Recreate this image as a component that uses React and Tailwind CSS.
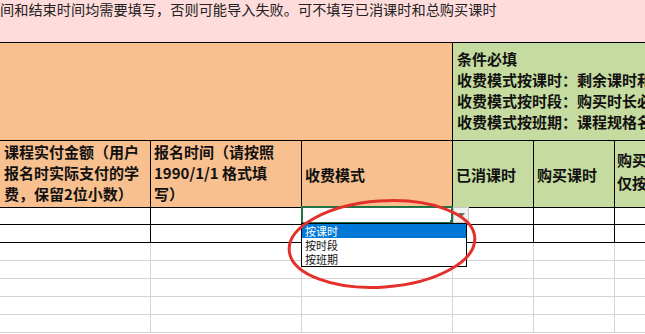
import React from 'react';

const font = { fontFamily: '"Noto Sans CJK SC", "Microsoft YaHei", sans-serif' };

const greenLines = [
  '条件必填',
  '收费模式按课时：剩余课时和购买课时必填',
  '收费模式按时段：购买时长必填',
  '收费模式按班期：课程规格名称必填',
];

const options = ['按课时', '按时段', '按班期'];

const Row = ({ height, dark }) => {
  const line = dark ? 'border-black' : 'border-[#d4d4d4]';
  return (
    <div className={`flex shrink-0 border-b ${line}`} style={{ height }}>
      <div className={`w-[151px] shrink-0 border-r ${line}`} />
      <div className={`w-[151px] shrink-0 border-r ${line}`} />
      <div className={`w-[151px] shrink-0 border-r ${line}`} />
      <div className={`w-[81px] shrink-0 border-r ${line}`} />
      <div className={`w-[81px] shrink-0 border-r ${line}`} />
      <div className="flex-1" />
    </div>
  );
};

export default function App() {
  return (
    <div className="relative w-[645px] h-[334px] overflow-hidden bg-white text-[#111]" style={font}>
      {/* note row */}
      <div className="h-[43px] bg-[#fedcdb] border-b border-black overflow-hidden">
        <p className="whitespace-nowrap text-[14.2px] leading-[18px] text-[#222]">
          间和结束时间均需要填写，否则可能导入失败。可不填写已消课时和总购买课时
        </p>
      </div>

      {/* merged colour band */}
      <div className="flex h-[98px] border-b border-black">
        <div className="w-[453px] shrink-0 bg-[#f8bf8f] border-r border-black" />
        <div className="flex-1 bg-[#c5db9f] pt-[5px] pl-[4px] overflow-hidden">
          {greenLines.map((t) => (
            <p key={t} className="whitespace-nowrap text-[15px] font-bold leading-[21px]">
              {t}
            </p>
          ))}
        </div>
      </div>

      {/* header row */}
      <div className="flex h-[67px] border-b border-black text-[15px] font-bold leading-[21px]">
        <div className="w-[151px] shrink-0 bg-[#f8bf8f] border-r border-black flex items-center pl-[4px] pr-[2px] pb-[3px]">
          <p>课程实付金额（用户报名时实际支付的学费，保留2位小数）</p>
        </div>
        <div className="w-[151px] shrink-0 bg-[#f8bf8f] border-r border-black flex items-center pl-[3px] pr-[2px] pb-[3px]">
          <p>
            报名时间（请按照
            <br />
            1990/1/1 格式填
            <br />
            写）
          </p>
        </div>
        <div className="w-[151px] shrink-0 bg-[#f8bf8f] border-r border-black flex items-center pl-[3px]">
          <p>收费模式</p>
        </div>
        <div className="w-[81px] shrink-0 bg-[#c5db9f] border-r border-black flex items-center pl-[3px]">
          <p>已消课时</p>
        </div>
        <div className="w-[81px] shrink-0 bg-[#c5db9f] border-r border-black flex items-center pl-[3px]">
          <p>购买课时</p>
        </div>
        <div className="flex-1 bg-[#c5db9f] flex items-center pl-[2px] pb-[6px] overflow-hidden">
          <p className="whitespace-nowrap leading-[23px]">
            购买时长
            <br />
            仅按时段
          </p>
        </div>
      </div>

      <Row height={17} dark />
      <Row height={18} dark />
      {[0, 1, 2, 3, 4].map((i) => (
        <Row key={i} height={18} />
      ))}

      {/* selected cell */}
      <div className="absolute left-[301px] top-[206px] w-[152px] h-[18px] border-2 border-[#217346]" />
      <div className="absolute left-[450px] top-[220px] w-[4px] h-[4px] bg-[#217346]" />

      {/* dropdown arrow */}
      <div className="absolute left-[453px] top-[207px] w-[16px] h-[16px] bg-[#f0f0f0] border border-[#c8c8c8] flex items-center justify-center">
        <svg width="7" height="4" viewBox="0 0 7 4">
          <path d="M0 0 L7 0 L3.5 4 Z" fill="#6d6d6d" />
        </svg>
      </div>

      {/* dropdown list */}
      <div className="absolute left-[301px] top-[223px] w-[166px] h-[44px] bg-white border border-black text-[11px] leading-[14px]">
        {options.map((o, i) => (
          <div
            key={o}
            className={`h-[14px] pl-[3px] ${i === 0 ? 'bg-[#0078d7] text-white' : 'text-[#111]'}`}
          >
            {o}
          </div>
        ))}
      </div>

      {/* red mark */}
      <svg className="absolute left-0 top-0 pointer-events-none" width="645" height="334">
        <ellipse
          cx="382"
          cy="244"
          rx="93"
          ry="43"
          transform="rotate(-4 382 244)"
          fill="none"
          stroke="#e3302a"
          strokeWidth="3"
        />
      </svg>
    </div>
  );
}
